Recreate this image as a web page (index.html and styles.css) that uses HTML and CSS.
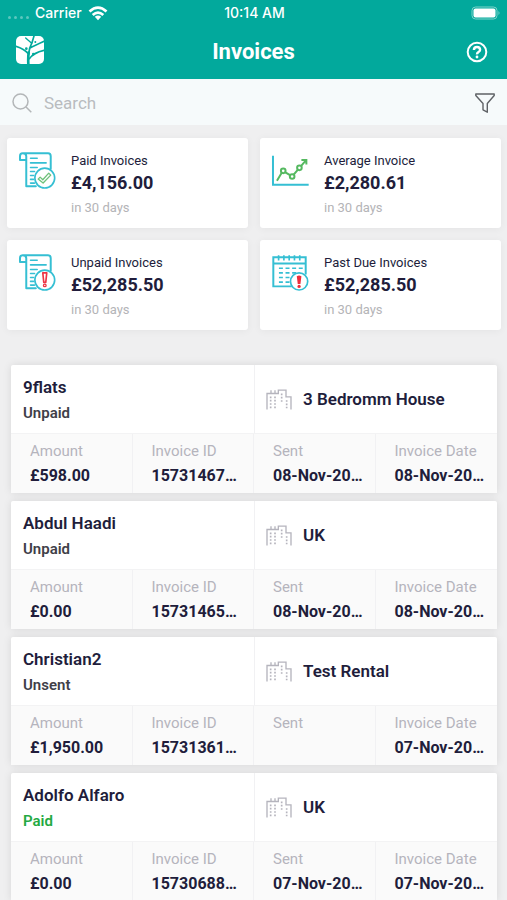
FILE: index.html
```html
<!DOCTYPE html>
<html lang="en">
<head>
<meta charset="utf-8">
<meta name="viewport" content="width=device-width, initial-scale=1">
<title>Invoices</title>
<link rel="stylesheet" href="styles.css">
</head>
<body>
<svg class="defs" aria-hidden="true">
  <symbol id="scroll" viewBox="54 62 118 118">
    <g fill="none" stroke="#35bfd3" stroke-width="6" stroke-linecap="round" stroke-linejoin="round">
      <path d="M68 69H145Q153 69 153 78V116M68 69Q60 69 60 78V89H79V78Q79 69 68 69M79 89V169H108"/>
      <path stroke-width="5" d="M92 84H112M92 98H139M92 112H112M92 124H104M92 136H101M92 148H101M92 159H104"/>
      <circle cx="135" cy="144" r="30" fill="#fff" stroke-width="5"/>
    </g>
  </symbol>
  <symbol id="building" viewBox="36 96 84 68">
    <g fill="none" stroke="#b5b4bd" stroke-width="4">
      <path d="M42 160V112H76V102H99V122H114V160M54 112V102M66 112V102"/>
      <path stroke-width="5" stroke-dasharray="5 5" d="M53 121V156M66 121V156M86 112V142M101 132V156"/>
    </g>
  </symbol>
</svg>

<header class="header">
  <div class="status">
    <div class="carrier">
      <span class="signal"><i></i><i></i><i></i><i></i></span>
      <span>Carrier</span>
      <svg class="wifi" viewBox="0 0 20 15" aria-hidden="true">
        <g fill="none" stroke="#fff" stroke-width="2.7"><path d="M1.5 5.5Q10-2.3 18.500 5.500M4.700 9Q10 4.200 15.300 9"/></g>
        <path fill="#fff" d="M6.800 10.800Q10 8.200 13.200 10.800L10 14.200Z"/>
      </svg>
    </div>
    <span class="time">10:14 AM</span>
    <svg class="battery" viewBox="0 0 30 15" aria-hidden="true">
      <rect x="1" y="1" width="25" height="12" rx="3.500" fill="none" stroke="#7fd3cb"/>
      <rect x="2.500" y="2.500" width="22" height="9" rx="2" fill="#fff"/>
      <path fill="#7fd3cb" d="M27.500 5Q29.500 7 27.500 9Z"/>
    </svg>
  </div>
  <div class="nav">
    <svg class="logo" viewBox="0 0 84 84" aria-hidden="true">
      <rect width="84" height="84" rx="15" fill="#fff"/>
      <g fill="none" stroke="#02a99c" stroke-linecap="round">
        <path stroke-width="8" d="M37 84Q36 64 38 50"/>
        <path stroke-width="5" d="M38 54Q40 34 48 20L54 0M38 54Q24 38 0 31M40 68Q53 50 84 43M42 36Q58 28 84 16"/>
        <path stroke-width="4" d="M47 22L29 6"/>
      </g>
      <g fill="#02a99c"><circle cx="31" cy="38" r="4"/><circle cx="52" cy="54" r="4"/><circle cx="58" cy="18" r="3"/></g>
    </svg>
    <h1>Invoices</h1>
    <button class="icon-button" type="button" aria-label="Help">
      <svg class="help" viewBox="0 0 22 22" aria-hidden="true">
        <g fill="none" stroke="#fff" stroke-width="2"><circle cx="11" cy="11" r="9.300"/><path stroke-width="2.400" d="M7.900 9Q8 6 11 6T14.100 8.700Q14.100 10 12.500 11T11 13.400"/></g>
        <circle cx="11" cy="16" r="1.400" fill="#fff"/>
      </svg>
    </button>
  </div>
</header>

<form class="search" role="search">
  <svg class="magnifier" viewBox="0 0 20 20" aria-hidden="true"><g fill="none" stroke="#b3b6b8" stroke-width="1.500"><circle cx="8.500" cy="8.500" r="7.500"/><path d="M14 14L19.300 19.300"/></g></svg>
  <input type="search" placeholder="Search" aria-label="Search">
  <button class="icon-button" type="button" aria-label="Filter">
    <svg class="funnel" viewBox="0 0 20 20" aria-hidden="true"><path fill="none" stroke="#5f6266" stroke-width="1.400" stroke-linejoin="round" d="M.8 1H19.200V2.500L12.300 10.500V19.200L8 16.800V10.500L.8 2.500Z"/></svg>
  </button>
</form>

<main>
  <section class="summary" aria-label="Summary">
    <article class="stat">
      <svg class="stat-icon" viewBox="54 62 118 118" aria-hidden="true">
        <use href="#scroll" x="54" y="62" width="118" height="118"/>
        <path fill="#fff" stroke="#6ec17a" stroke-width="4" stroke-linejoin="round" d="M115 147L121 141L129 149L147 129L153 135L130 159Z"/>
      </svg>
      <div><h2>Paid Invoices</h2><strong>£4,156.00</strong><p>in 30 days</p></div>
    </article>
    <article class="stat">
      <svg class="stat-icon" viewBox="54 62 118 118" aria-hidden="true">
        <path fill="none" stroke="#35bfd3" stroke-width="6" d="M60 76V164H168"/>
        <g fill="#fff" stroke="#55b960" stroke-width="6">
          <path fill="none" d="M72 152L90 122L118 139L140 113L159 91M146 89H161V103"/>
          <circle cx="91" cy="122" r="7"/><circle cx="118" cy="139" r="7"/><circle cx="140" cy="113" r="7"/>
        </g>
      </svg>
      <div><h2>Average Invoice</h2><strong>£2,280.61</strong><p>in 30 days</p></div>
    </article>
    <article class="stat">
      <svg class="stat-icon" viewBox="54 62 118 118" aria-hidden="true">
        <use href="#scroll" x="54" y="62" width="118" height="118"/>
        <path fill="#fff" stroke="#ee3344" stroke-width="5" stroke-linejoin="round" d="M129 122H141L138 151H132Z"/>
        <circle cx="135" cy="160" r="4" fill="#fff" stroke="#ee3344" stroke-width="4"/>
      </svg>
      <div><h2>Unpaid Invoices</h2><strong>£52,285.50</strong><p>in 30 days</p></div>
    </article>
    <article class="stat">
      <svg class="stat-icon" viewBox="54 53 118 118" aria-hidden="true">
        <g fill="none" stroke="#35bfd3" stroke-width="6">
          <path d="M117 154H61V66H159V118M61 85H159"/>
          <path stroke-width="5" d="M77 60V76M93 60V76M109 60V76M125 60V76M141 60V76"/>
          <path stroke-width="5" stroke-dasharray="12 8" d="M78 99H150M78 113H130M78 127H112M78 141H110"/>
          <circle cx="139" cy="139" r="26" fill="#fff" stroke-width="5"/>
        </g>
        <path fill="#ee2e3c" d="M132 123Q139 119 146 123L143 147H135Z"/><circle cx="139" cy="154" r="5" fill="#ee2e3c"/>
      </svg>
      <div><h2>Past Due Invoices</h2><strong>£52,285.50</strong><p>in 30 days</p></div>
    </article>
  </section>

  <section class="invoices" aria-label="Invoice list">
    <article class="invoice">
      <div class="client"><h3>9flats</h3><p>Unpaid</p></div>
      <div class="rental"><svg class="building" aria-hidden="true"><use href="#building"/></svg><span>3 Bedromm House</span></div>
      <dl>
        <div><dt>Amount</dt><dd>£598.00</dd></div>
        <div><dt>Invoice ID</dt><dd>15731467…</dd></div>
        <div><dt>Sent</dt><dd>08-Nov-20…</dd></div>
        <div><dt>Invoice Date</dt><dd>08-Nov-20…</dd></div>
      </dl>
    </article>
    <article class="invoice">
      <div class="client"><h3>Abdul Haadi</h3><p>Unpaid</p></div>
      <div class="rental"><svg class="building" aria-hidden="true"><use href="#building"/></svg><span>UK</span></div>
      <dl>
        <div><dt>Amount</dt><dd>£0.00</dd></div>
        <div><dt>Invoice ID</dt><dd>15731465…</dd></div>
        <div><dt>Sent</dt><dd>08-Nov-20…</dd></div>
        <div><dt>Invoice Date</dt><dd>08-Nov-20…</dd></div>
      </dl>
    </article>
    <article class="invoice">
      <div class="client"><h3>Christian2</h3><p>Unsent</p></div>
      <div class="rental"><svg class="building" aria-hidden="true"><use href="#building"/></svg><span>Test Rental</span></div>
      <dl>
        <div><dt>Amount</dt><dd>£1,950.00</dd></div>
        <div><dt>Invoice ID</dt><dd>15731361…</dd></div>
        <div><dt>Sent</dt><dd></dd></div>
        <div><dt>Invoice Date</dt><dd>07-Nov-20…</dd></div>
      </dl>
    </article>
    <article class="invoice">
      <div class="client"><h3>Adolfo Alfaro</h3><p class="paid">Paid</p></div>
      <div class="rental"><svg class="building" aria-hidden="true"><use href="#building"/></svg><span>UK</span></div>
      <dl>
        <div><dt>Amount</dt><dd>£0.00</dd></div>
        <div><dt>Invoice ID</dt><dd>15730688…</dd></div>
        <div><dt>Sent</dt><dd>07-Nov-20…</dd></div>
        <div><dt>Invoice Date</dt><dd>07-Nov-20…</dd></div>
      </dl>
    </article>
  </section>
</main>
</body>
</html>
```

FILE: styles.css
```css
* { box-sizing: border-box; }

body {
  margin: 0;
  background: #efeff0;
  color: #211d3b;
  font-family: Roboto, "Liberation Sans", sans-serif;
}

h1, h2, h3, p, dl, dd { margin: 0; }
svg { display: block; flex: none; }
.defs { position: absolute; width: 0; height: 0; }

.header { background: #02a99c; color: #fff; }

.status {
  display: grid;
  grid-template-columns: 1fr auto 1fr;
  align-items: center;
  height: 26px;
  padding: 0 6px 0 8px;
  font: 500 14px/16px Inter, sans-serif;
}
.carrier { display: flex; align-items: center; gap: 6px; }
.signal { display: flex; gap: 3px; padding-top: 8px; }
.signal i { width: 3px; height: 3px; border-radius: 50%; background: #5cc7be; }
.wifi { width: 20px; height: 15px; }
.battery { width: 30px; height: 15px; justify-self: end; }

.nav {
  display: grid;
  grid-template-columns: 1fr auto 1fr;
  align-items: center;
  height: 53px;
  padding: 0 19px 2px;
}
.logo { width: 28px; height: 28px; margin: 0 0 4px -3px; }
.nav h1 { font-size: 22px; line-height: 26px; font-weight: 700; }
.nav .icon-button { justify-self: end; }
.help { width: 22px; height: 22px; }

.icon-button { padding: 0; border: 0; background: none; cursor: pointer; }

.search {
  display: flex;
  align-items: center;
  gap: 12px;
  height: 46px;
  padding: 2px 12px 0;
  background: #f6fafb;
}
.magnifier { width: 20px; height: 20px; }
.funnel { width: 20px; height: 20px; }
.search input {
  flex: 1;
  min-width: 0;
  padding: 0;
  border: 0;
  outline: 0;
  background: none;
  color: #211d3b;
  font: 400 17px/24px Roboto, sans-serif;
}
.search input::placeholder { color: #b9bcbf; opacity: 1; }

.summary {
  display: grid;
  grid-template-columns: 1fr 1fr;
  gap: 12px;
  padding: 13px 6px 35px 7px;
}
.stat {
  display: flex;
  gap: 14px;
  height: 90px;
  padding: 13px 11px;
  border-radius: 3px;
  background: #fff;
  box-shadow: 0 1px 8px rgba(0, 0, 0, 0.05);
}
.stat-icon { width: 39px; height: 39px; }
.stat h2 { font-size: 13px; line-height: 20px; font-weight: 400; }
.stat strong { display: block; font-size: 18px; line-height: 24px; font-weight: 700; }
.stat p { padding-top: 3px; font-size: 13px; line-height: 20px; color: #b4b4b7; }

.invoices { display: grid; gap: 8px; padding: 0 10px 0 11px; }
.invoice {
  display: grid;
  grid-template-columns: 1fr 1fr;
  border-radius: 2px;
  background: #fff;
  box-shadow: 0 0 8px rgba(0, 0, 0, 0.1);
}
.client { height: 68px; padding: 10px 12px 0; }
.client h3 { font-size: 17px; line-height: 24px; font-weight: 600; }
.client p { padding-top: 4px; font-size: 15px; line-height: 20px; font-weight: 600; color: #3f4048; }
.client .paid { color: #23a942; }
.rental {
  display: flex;
  align-items: center;
  gap: 10px;
  padding: 0 10px;
  border-left: 1px solid #f1f1f3;
  font-size: 17px;
  line-height: 24px;
  font-weight: 600;
}
.building { width: 28px; height: 23px; }

.invoice dl {
  grid-column: 1 / -1;
  display: grid;
  grid-template-columns: repeat(4, 1fr);
  height: 60px;
  border-top: 1px solid #f3f3f4;
  background: #fafafa;
}
.invoice dl div { min-width: 0; padding: 6px 0 0 19px; border-right: 1px solid #f1f1f3; }
.invoice dl div:last-child { border-right: 0; }
.invoice dt { font-size: 15px; line-height: 22px; color: #b5b4bd; }
.invoice dd { font-size: 16px; line-height: 28px; font-weight: 700; white-space: nowrap; }
```
